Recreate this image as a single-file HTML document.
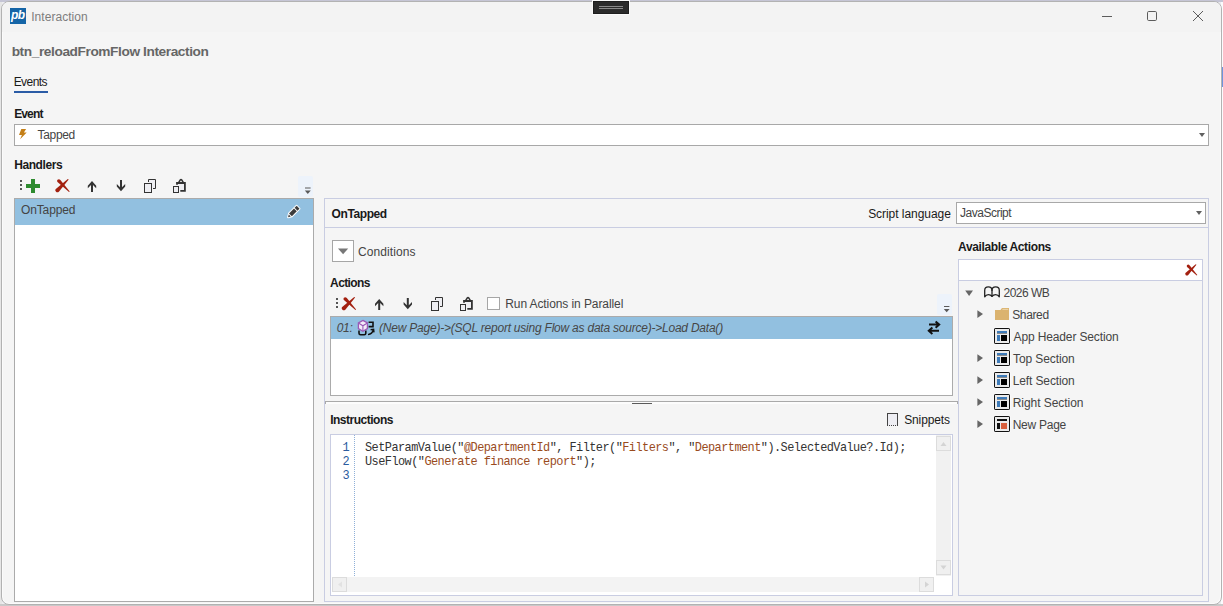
<!DOCTYPE html>
<html lang="en">
<head>
<meta charset="utf-8">
<title>Interaction</title>
<style>
html,body{margin:0;padding:0;}
body{width:1223px;height:606px;overflow:hidden;background:#ececf0;position:relative;
  font-family:"Liberation Sans",sans-serif;font-size:12px;color:#1a1a1a;}
*{box-sizing:border-box;}
.abs{position:absolute;}
/* desktop strips behind the window */
#desk-top{left:0;top:0;width:1223px;height:2px;background:#c5c5d5;}
#desk-bottom{left:0;top:604px;width:1223px;height:2px;background:#c9c9c9;}
#desk-right{left:1221px;top:0;width:2px;height:606px;background:#fbfbfd;}
#desk-left{left:0;top:0;width:2px;height:606px;background:#e6e6e6;}
/* window */
#win{left:1px;top:1px;width:1221px;height:604px;border:1px solid #b2b2b2;border-radius:8px;background:#f5f5f5;overflow:hidden;box-shadow:inset 0 0 0 1px #fbfbfb;}
#titlebar{left:0;top:0;width:1221px;height:30px;background:#f3f3f3;}
#grabber{left:593px;top:1px;width:36px;height:13px;background:#2b2b2b;border:1px solid #1e1e1e;box-shadow:0 0 0 1px #fafafa;}
#grabber i{position:absolute;left:5px;width:24px;height:1px;background:#8a8a8a;}
#logo{left:10px;top:8px;width:16px;height:16px;background:#1565a7;overflow:hidden;}
#logo span{position:absolute;left:1px;top:-1px;font:italic bold 12px/16px "Liberation Sans",sans-serif;color:#fff;letter-spacing:-0.6px;}
/* text runs: each one positioned on its baseline */
.t{position:absolute;height:0;line-height:0;white-space:nowrap;font-size:12px;}
.b{font-weight:bold;}
.i{font-style:italic;}
.g{color:#444;}
/* boxes */
.combo{background:#fff;border:1px solid #a8a8a8;}
.list{background:#fff;border:1px solid #ababab;}
.sel{background:#92c0e0;}
.lav{border:1px solid #c9cde2;}
#tabline{left:14px;top:91px;width:34px;height:2px;background:#2b5ca6;}
.ovf{background:#edf3fb;border-radius:2px;}
svg{position:absolute;overflow:visible;}
/* code */
.code{position:absolute;height:0;line-height:0;white-space:pre;font-family:"Liberation Mono",monospace;font-size:11.9px;letter-spacing:-0.54px;color:#333;}
.code .s{color:#9a4b1d;}
.ln{color:#2b5c9e;}
.sb{background:#f1f1f1;}
.sbb{background:#f0f0f0;border:1px solid #dcdcdc;}
#t_title{left:31.16px;top:17.01px;letter-spacing:0.054px;font-size:12px;}
#t_head{left:11.68px;top:52.00px;letter-spacing:-0.410px;font-size:13.7px;}
#t_events{left:13.70px;top:82.01px;letter-spacing:-0.576px;font-size:12px;}
#t_event{left:14.16px;top:114.01px;letter-spacing:-0.855px;font-size:12px;}
#t_tapped{left:37.62px;top:135.01px;letter-spacing:-0.360px;font-size:12px;}
#t_handlers{left:14.16px;top:165.01px;letter-spacing:-0.411px;font-size:12px;}
#t_ontapped1{left:21.08px;top:210.01px;letter-spacing:-0.154px;font-size:12px;}
#t_ontapped2{left:331.58px;top:214.01px;letter-spacing:-0.411px;font-size:12px;}
#t_scriptlang{left:868.16px;top:214.01px;letter-spacing:-0.051px;font-size:12px;}
#t_js{left:960.08px;top:213.01px;letter-spacing:-0.500px;font-size:12px;}
#t_cond{left:358.10px;top:252.01px;letter-spacing:0.080px;font-size:12px;}
#t_actions{left:330.12px;top:283.01px;letter-spacing:-0.630px;font-size:12px;}
#t_run{left:505.22px;top:304.01px;letter-spacing:-0.090px;font-size:12px;}
#t_01{left:336.64px;top:328.01px;letter-spacing:-0.270px;font-size:12px;}
#t_act{left:379.08px;top:328.01px;letter-spacing:-0.224px;font-size:12px;}
#t_avail{left:958.08px;top:247.01px;letter-spacing:-0.371px;font-size:12px;}
#t_tr1{left:1003.58px;top:293.01px;letter-spacing:-0.540px;font-size:12px;}
#t_tr2{left:1012.20px;top:315.01px;letter-spacing:-0.360px;font-size:12px;}
#t_tr3{left:1013.58px;top:337.01px;letter-spacing:-0.138px;font-size:12px;}
#t_tr4{left:1013.10px;top:359.01px;letter-spacing:-0.108px;font-size:12px;}
#t_tr5{left:1012.70px;top:381.01px;letter-spacing:-0.115px;font-size:12px;}
#t_tr6{left:1012.70px;top:403.01px;letter-spacing:-0.045px;font-size:12px;}
#t_tr7{left:1012.70px;top:425.01px;letter-spacing:-0.257px;font-size:12px;}
#t_instr{left:330.16px;top:420.01px;letter-spacing:-0.491px;font-size:12px;}
#t_snip{left:904.20px;top:420.01px;letter-spacing:-0.129px;font-size:12px;}
</style>
</head>
<body>
<div id="desk-left" class="abs"></div>
<div id="desk-right" class="abs"></div>
<div id="desk-top" class="abs"></div>
<div id="desk-bottom" class="abs"></div>
<div class="abs" style="left:1222px;top:67px;width:1px;height:20px;background:#6f93dc"></div>
<div id="win" class="abs"><div id="titlebar" class="abs"></div></div>

<!-- title bar -->
<div id="grabber" class="abs"><i style="top:4px"></i><i style="top:6px"></i></div>
<div id="logo" class="abs"><span>pb</span></div>
<div id="t_title" class="t" style="color:#7d7d7d">Interaction</div>
<svg style="left:1095px;top:4px" width="120" height="24" viewBox="1095 4 120 24" fill="none" stroke="#5c5c5c" stroke-width="1">
  <path d="M1102 16.5H1112"/>
  <rect x="1147.5" y="11.5" width="9" height="9" rx="1.2"/>
  <path d="M1193 11L1203 21M1203 11L1193 21"/>
</svg>

<!-- header -->
<div id="t_head" class="t b" style="color:#666">btn_reloadFromFlow Interaction</div>
<div id="t_events" class="t">Events</div>
<div id="tabline" class="abs"></div>

<!-- event -->
<div id="t_event" class="t b">Event</div>
<div class="abs combo" style="left:14px;top:124px;width:1195px;height:22px"></div>
<svg style="left:18px;top:128px" width="10" height="12" viewBox="18 128 10 12"><path d="M21.3 129.1L26.1 129.1L23.9 132.6L26.7 132.6L20.1 139.3L21.9 135.1L19 135.1Z" fill="#c47f17"/></svg>
<div id="t_tapped" class="t g">Tapped</div>
<svg style="left:1198px;top:132px" width="8" height="6" viewBox="1198 132 8 6"><path d="M1199 133H1205L1202 137Z" fill="#606060"/></svg>

<!-- handlers -->
<div id="t_handlers" class="t b">Handlers</div>
<div class="abs ovf" style="left:298px;top:176px;width:15px;height:21px"></div>
<svg id="tb1" style="left:14px;top:176px" width="300" height="22" viewBox="14 176 300 22">
  <g fill="#555"><rect x="20" y="180" width="2" height="2"/><rect x="20" y="184" width="2" height="2"/><rect x="20" y="188" width="2" height="2"/></g>
  <path d="M31 179h4v5h5v4h-5v5h-4v-5h-5v-4h5z" fill="#2e8b2f"/>
  <g id="redx"><path d="M57.5 179.7Q59 178.6 60.4 179.9L69.7 191.5L69 192.1L57.5 182.1Q56.5 180.9 57.5 179.7Z" fill="#a3200f"/><path d="M55.5 189.3L67.8 178.9L68.7 179.5L58.9 191.7Q57.4 192.9 56 191.8Q54.8 190.6 55.5 189.3Z" fill="#a3200f"/></g>
  <g id="arrup" fill="#333"><path d="M92 181L96.2 185.7V188.3L93 184.9V192H91V184.9L87.8 188.3V185.7Z"/></g>
  <g id="arrdn" fill="#333"><path d="M121 191.2L116.8 186.5V183.9L120 187.3V180H122V187.3L125.2 183.9V186.5Z"/></g>
  <g id="copy" stroke="#333" stroke-width="1" fill="#eeeef2"><path d="M148.5 182V179.5H155.5V188.5H153"/><rect x="144.5" y="183.5" width="7" height="9"/></g>
  <g id="paste" stroke="#333" fill="none"><path d="M177 183H185V191H180.3Z" fill="#eeeef2" stroke="none"/><path d="M180.3 190.9H184.9V183H177V184.8" stroke-width="1.8"/><path d="M178.6 182.6L180.2 180Q181 179.2 181.8 180L183.4 182.6" stroke-width="1.5"/><rect x="173.5" y="186.5" width="5" height="6" fill="#eeeef2" stroke-width="1"/></g>
  <g fill="#5a5a5a"><rect x="305" y="187.5" width="5.6" height="1"/><path d="M304.8 190.4H310.8L307.8 193.9Z"/></g>
</svg>
<div class="abs list" style="left:14px;top:198px;width:300px;height:404px"><div class="abs sel" style="left:0;top:0;width:298px;height:26px"></div></div>
<div id="t_ontapped1" class="t g">OnTapped</div>
<svg style="left:286px;top:204px" width="15" height="15" viewBox="286 204 15 15"><g transform="translate(287.9 217.4) rotate(-45)"><path d="M0 0L3.6 -2.2H14.5V2.2H3.6Z" fill="#fff" stroke="#fff" stroke-width="1.6" stroke-linejoin="round"/><path d="M0.3 0L2.6 -1.4V1.4Z" fill="#3c3c3c"/><rect x="3.6" y="-2" width="7" height="4" fill="#3c3c3c"/><rect x="11.5" y="-2" width="2.9" height="4" fill="#3c3c3c"/></g></svg>

<!-- right panel -->
<div class="abs lav" style="left:324px;top:198px;width:885px;height:404px"></div>
<div class="abs" style="left:325px;top:227px;width:883px;height:1px;background:#c9cde2"></div>
<div id="t_ontapped2" class="t b">OnTapped</div>
<div id="t_scriptlang" class="t">Script language</div>
<div class="abs combo" style="left:956px;top:202px;width:250px;height:22px"></div>
<div id="t_js" class="t g">JavaScript</div>
<svg style="left:1195px;top:210px" width="8" height="6" viewBox="1195 210 8 6"><path d="M1196 211H1202L1199 215Z" fill="#606060"/></svg>

<!-- conditions -->
<div class="abs" style="left:332px;top:240px;width:22px;height:22px;background:#fff;border:1px solid #a6a6a6"></div>
<svg style="left:337px;top:247px" width="12" height="8" viewBox="337 247 12 8"><path d="M338 248.4H348.2L343.1 254.2Z" fill="#777"/></svg>
<div id="t_cond" class="t g">Conditions</div>

<!-- actions -->
<div id="t_actions" class="t b">Actions</div>
<div class="abs ovf" style="left:937px;top:294px;width:15px;height:21px"></div>
<svg id="tb2" style="left:330px;top:294px" width="624" height="22" viewBox="330 294 624 22">
  <g fill="#555"><rect x="336" y="298" width="2" height="2"/><rect x="336" y="302" width="2" height="2"/><rect x="336" y="306" width="2" height="2"/></g>
  <g transform="translate(286.4 118)"><path d="M57.5 179.7Q59 178.6 60.4 179.9L69.7 191.5L69 192.1L57.5 182.1Q56.5 180.9 57.5 179.7Z" fill="#a3200f"/><path d="M55.5 189.3L67.8 178.9L68.7 179.5L58.9 191.7Q57.4 192.9 56 191.8Q54.8 190.6 55.5 189.3Z" fill="#a3200f"/></g>
  <g transform="translate(287.2 118)" fill="#333"><path d="M92 181L96.2 185.7V188.3L93 184.9V192H91V184.9L87.8 188.3V185.7Z"/></g>
  <g transform="translate(286.8 118)" fill="#333"><path d="M121 191.2L116.8 186.5V183.9L120 187.3V180H122V187.3L125.2 183.9V186.5Z"/></g>
  <g transform="translate(287 118)" stroke="#333" stroke-width="1" fill="#eeeef2"><path d="M148.5 182V179.5H155.5V188.5H153"/><rect x="144.5" y="183.5" width="7" height="9"/></g>
  <g transform="translate(287 118)" stroke="#333" fill="none"><path d="M177 183H185V191H180.3Z" fill="#eeeef2" stroke="none"/><path d="M180.3 190.9H184.9V183H177V184.8" stroke-width="1.8"/><path d="M178.6 182.6L180.2 180Q181 179.2 181.8 180L183.4 182.6" stroke-width="1.5"/><rect x="173.5" y="186.5" width="5" height="6" fill="#eeeef2" stroke-width="1"/></g>
  <g fill="#5a5a5a"><rect x="944" y="306" width="5.4" height="1"/><path d="M943.8 308.9H949.6L946.7 312.3Z"/></g>
</svg>
<div class="abs" style="left:487px;top:297px;width:13px;height:13px;background:#fff;border:1px solid #a6a6a6"></div>
<div id="t_run" class="t g">Run Actions in Parallel</div>
<div class="abs list" style="left:330px;top:316px;width:623px;height:80px"><div class="abs sel" style="left:0;top:0;width:621px;height:22px"></div></div>
<div id="t_01" class="t i" style="color:#474747">01:</div>
<svg style="left:357px;top:319px" width="18" height="18" viewBox="357 319 18 18" fill="none">
  <path d="M368.6 322.2H373V326.6H368.6" stroke="#111" stroke-width="1.6"/>
  <path d="M359 330.6V333.2Q359 334.8 360.6 334.8H364.2Q365.8 334.8 365.8 333.2V330.6" stroke="#111" stroke-width="1.6"/>
  <path d="M368 334.6Q372.4 334 373.2 330M370.6 329.8L373.6 329.4L374 332.4" stroke="#111" stroke-width="1.4"/>
  <path d="M362.9 320.4L367.4 323V328.6L362.9 331.2L358.4 328.6V323Z" fill="#f3ecf8" stroke="#9b59b6" stroke-width="1.3"/>
  <path d="M358.8 323.2L362.9 325.8L367 323.2M362.9 325.8V330.8" stroke="#9b59b6" stroke-width="1.1"/>
</svg>
<div id="t_act" class="t i" style="color:#474747">(New Page)-&gt;(SQL report using Flow as data source)-&gt;Load Data()</div>
<svg style="left:926px;top:320px" width="16" height="16" viewBox="926 320 16 16" fill="none" stroke="#111" stroke-width="2"><path d="M929 324.6H939M935.6 321.4L939.2 324.6L935.6 327.8"/><path d="M939 330.8H929M932.4 327.6L928.8 330.8L932.4 334"/></svg>

<!-- splitter -->
<div class="abs" style="left:325px;top:401px;width:633px;height:1px;background:#a9a9a9"></div>
<div class="abs" style="left:325px;top:402px;width:633px;height:2px;background:#fcfcfc"></div>
<div class="abs" style="left:325px;top:402px;width:1px;height:2px;background:#a9a9a9"></div>
<div class="abs" style="left:957px;top:402px;width:1px;height:2px;background:#a9a9a9"></div>
<div class="abs" style="left:632px;top:403px;width:20px;height:1px;background:#5a5a5a"></div>

<!-- instructions -->
<div id="t_instr" class="t b">Instructions</div>
<div class="abs" style="left:887px;top:413px;width:11px;height:13px;background:#eeeef3;border:1px solid #444;border-bottom:1px dotted #444"></div>
<div id="t_snip" class="t">Snippets</div>
<div class="abs lav" style="left:330px;top:434px;width:623px;height:162px;background:#fff"></div>
<div class="abs" style="left:354px;top:435px;width:1px;height:141px;background:repeating-linear-gradient(to bottom,#8fb0d8 0,#8fb0d8 1px,transparent 1px,transparent 2px)"></div>
<div class="code ln" style="left:342.6px;top:447.8px">1</div>
<div class="code ln" style="left:342.6px;top:461.8px">2</div>
<div class="code ln" style="left:342.6px;top:475.8px">3</div>
<div id="c1" class="code" style="left:365px;top:447.8px">SetParamValue("<span class="s">@DepartmentId</span>", Filter("<span class="s">Filters</span>", "<span class="s">Department</span>").SelectedValue?.Id);</div>
<div id="c2" class="code" style="left:365px;top:461.8px">UseFlow("<span class="s">Generate finance report</span>");</div>
<!-- editor scrollbars -->
<div class="abs sb" style="left:936px;top:435px;width:15px;height:141px"></div>
<div class="abs sbb" style="left:936px;top:436px;width:15px;height:15px"></div>
<div class="abs sbb" style="left:936px;top:560px;width:15px;height:15px"></div>
<div class="abs sb" style="left:332px;top:577px;width:602px;height:15px;background:#f3f3f3"></div>
<div class="abs sbb" style="left:332px;top:577px;width:15px;height:15px"></div>
<div class="abs sbb" style="left:919px;top:577px;width:15px;height:15px"></div>
<svg style="left:331px;top:435px" width="620" height="158" viewBox="331 435 620 158" fill="#d4d4d4"><path d="M940.5 446H946.5L943.5 442Z"/><path d="M940.5 565.4H946.5L943.5 569.4Z"/><path d="M925 581.5V587.5L929 584.5Z"/><path d="M342 581.5V587.5L338 584.5Z" fill="#e2e2e2"/></svg>

<!-- available actions -->
<div id="t_avail" class="t b">Available Actions</div>
<div class="abs lav" style="left:958px;top:259px;width:245px;height:337px"></div>
<div class="abs" style="left:959px;top:260px;width:243px;height:20px;background:#fff"></div>
<div class="abs" style="left:959px;top:280px;width:243px;height:1px;background:#c9cde2"></div>
<svg style="left:1185px;top:263.6px" width="12.4" height="11.9" viewBox="55 178.8 14.8 13.6"><path d="M57.5 179.7Q59 178.6 60.4 179.9L69.7 191.5L69 192.1L57.5 182.1Q56.5 180.9 57.5 179.7Z" fill="#a3200f"/><path d="M55.5 189.3L67.8 178.9L68.7 179.5L58.9 191.7Q57.4 192.9 56 191.8Q54.8 190.6 55.5 189.3Z" fill="#a3200f"/></svg>
<svg id="tree" style="left:959px;top:281px" width="243" height="160" viewBox="959 281 243 160">
  <path d="M965.2 290.4H973L969.1 296Z" fill="#666"/>
  <g fill="none" stroke="#222" stroke-width="1.3" stroke-linecap="round"><path d="M984.7 296.8V290.4Q984.7 286.9 988.3 286.9Q992 286.9 992 290.4V296.2M984.7 296.8Q986 294.6 988.4 294.6Q990.6 294.6 992 296.4"/><path d="M999.3 296.8V290.4Q999.3 286.9 995.7 286.9Q992 286.9 992 290.4M999.3 296.8Q998 294.6 995.6 294.6Q993.4 294.6 992 296.4"/></g>
  <g fill="#666"><path d="M977.4 310.2V318L983 314.1Z"/><path d="M977.4 354.2V362L983 358.1Z"/><path d="M977.4 376.2V384L983 380.1Z"/><path d="M977.4 398.2V406L983 402.1Z"/><path d="M977.4 420.2V428L983 424.1Z"/></g>
  <path d="M995 310H1000.4L1002 308H1009V320H995Z" fill="#dbb36f"/><path d="M1002.4 309.4H1008.2" stroke="#ecd5ac" stroke-width="1"/>
  <g>
    <rect x="993.5" y="327.5" width="17" height="17" rx="1.5" fill="#fff" opacity="0.9"/>
    <rect x="994.5" y="328.5" width="15" height="15" rx="0.6" fill="#ebebeb" stroke="#111" stroke-width="1"/>
    <rect x="997" y="331" width="10" height="2" fill="#3d7ab8"/><rect x="997" y="333" width="10" height="1" fill="#8a8a8a"/>
    <rect x="997" y="335" width="3" height="6" fill="#3d7ab8"/><rect x="1001" y="335" width="6" height="6" fill="#000"/>
  </g>
  <g>
    <rect x="993.5" y="349.5" width="17" height="17" rx="1.5" fill="#fff" opacity="22.9"/>
    <rect x="994.5" y="350.5" width="15" height="15" rx="0.6" fill="#ebebeb" stroke="#111" stroke-width="1"/>
    <rect x="997" y="353" width="10" height="2" fill="#3d7ab8"/><rect x="997" y="355" width="10" height="1" fill="#8a8a8a"/>
    <rect x="997" y="357" width="3" height="6" fill="#3d7ab8"/><rect x="1001" y="357" width="6" height="6" fill="#000"/>
  </g>
  <g>
    <rect x="993.5" y="371.5" width="17" height="17" rx="1.5" fill="#fff" opacity="44.9"/>
    <rect x="994.5" y="372.5" width="15" height="15" rx="0.6" fill="#ebebeb" stroke="#111" stroke-width="1"/>
    <rect x="997" y="375" width="10" height="2" fill="#3d7ab8"/><rect x="997" y="377" width="10" height="1" fill="#8a8a8a"/>
    <rect x="997" y="379" width="3" height="6" fill="#3d7ab8"/><rect x="1001" y="379" width="6" height="6" fill="#000"/>
  </g>
  <g>
    <rect x="993.5" y="393.5" width="17" height="17" rx="1.5" fill="#fff" opacity="66.9"/>
    <rect x="994.5" y="394.5" width="15" height="15" rx="0.6" fill="#ebebeb" stroke="#111" stroke-width="1"/>
    <rect x="997" y="397" width="10" height="2" fill="#3d7ab8"/><rect x="997" y="399" width="10" height="1" fill="#8a8a8a"/>
    <rect x="997" y="401" width="3" height="6" fill="#3d7ab8"/><rect x="1001" y="401" width="6" height="6" fill="#000"/>
  </g>
  
  <g>
    <rect x="993.5" y="415.5" width="17" height="17" rx="1.5" fill="#fff" opacity="0.9"/>
    <rect x="994.5" y="416.5" width="15" height="15" rx="0.6" fill="#ebebeb" stroke="#111" stroke-width="1"/>
    <rect x="997" y="419" width="10" height="2" fill="#111"/>
    <rect x="997" y="423" width="3" height="6" fill="#111"/><rect x="1001" y="423" width="6" height="6" fill="#d95f3d"/>
  </g>
</svg>
<div id="t_tr1" class="t g">2026 WB</div>
<div id="t_tr2" class="t g">Shared</div>
<div id="t_tr3" class="t g">App Header Section</div>
<div id="t_tr4" class="t g">Top Section</div>
<div id="t_tr5" class="t g">Left Section</div>
<div id="t_tr6" class="t g">Right Section</div>
<div id="t_tr7" class="t g">New Page</div>
</body>
</html>
